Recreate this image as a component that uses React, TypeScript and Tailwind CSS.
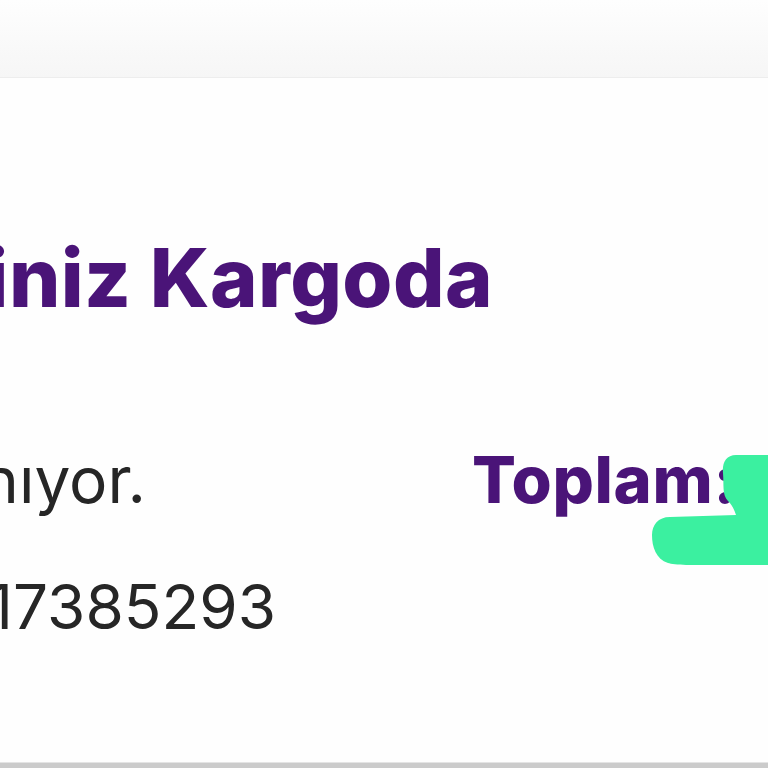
const purple = "text-[#4a1478]";

const Redaction = () => (
  <svg
    className="pointer-events-none absolute left-[650px] top-[8px]"
    width="118"
    height="110"
    viewBox="0 0 118 110"
  >
    <path
      d="M118 0 L86 0 C76 0 72 8 73 18 C74 30 72 40 78 46 C82 50 84 54 86 60 L20 62 C8 62 2 70 2 80 C2 92 6 104 18 108 C30 112 100 110 118 110 Z"
      fill="#3bf0a0"
    />
  </svg>
);

export default function App() {
  return (
    <div className="flex h-screen w-full flex-col overflow-hidden bg-white font-['Inter',sans-serif]">
      <header className="h-[78px] shrink-0 border-b border-[#ededed] bg-gradient-to-b from-[#fefefe] to-[#f6f6f6]" />

      <main className="flex flex-1 flex-col bg-[#fefefe]">
        <div className="mt-[160px] flex w-[493px] justify-end">
          <h1 className={`whitespace-nowrap text-[81px] font-extrabold leading-none tracking-[0.005em] ${purple}`}>
            Siparişiniz Kargoda
          </h1>
        </div>

        <div className="relative mt-[128px] flex items-center">
          <div className="flex w-[146px] shrink-0 justify-end">
            <p className="whitespace-nowrap text-[64px] leading-none text-[#262626]">Kargonuz hazırlanıyor.</p>
          </div>
          <span className={`ml-[326px] whitespace-nowrap text-[65px] font-extrabold leading-none tracking-[0.01em] ${purple}`}>
            Toplam:
          </span>
          <Redaction />
        </div>

        <div className="mt-[64px] flex w-[276px] justify-end">
          <p className="whitespace-nowrap text-[62px] leading-none text-[#262626]">Sipariş No: 17385293</p>
        </div>
      </main>

      <footer className="h-[6px] shrink-0 border-t border-[#e4e4e4] bg-[#cbcbcb]" />
    </div>
  );
}
